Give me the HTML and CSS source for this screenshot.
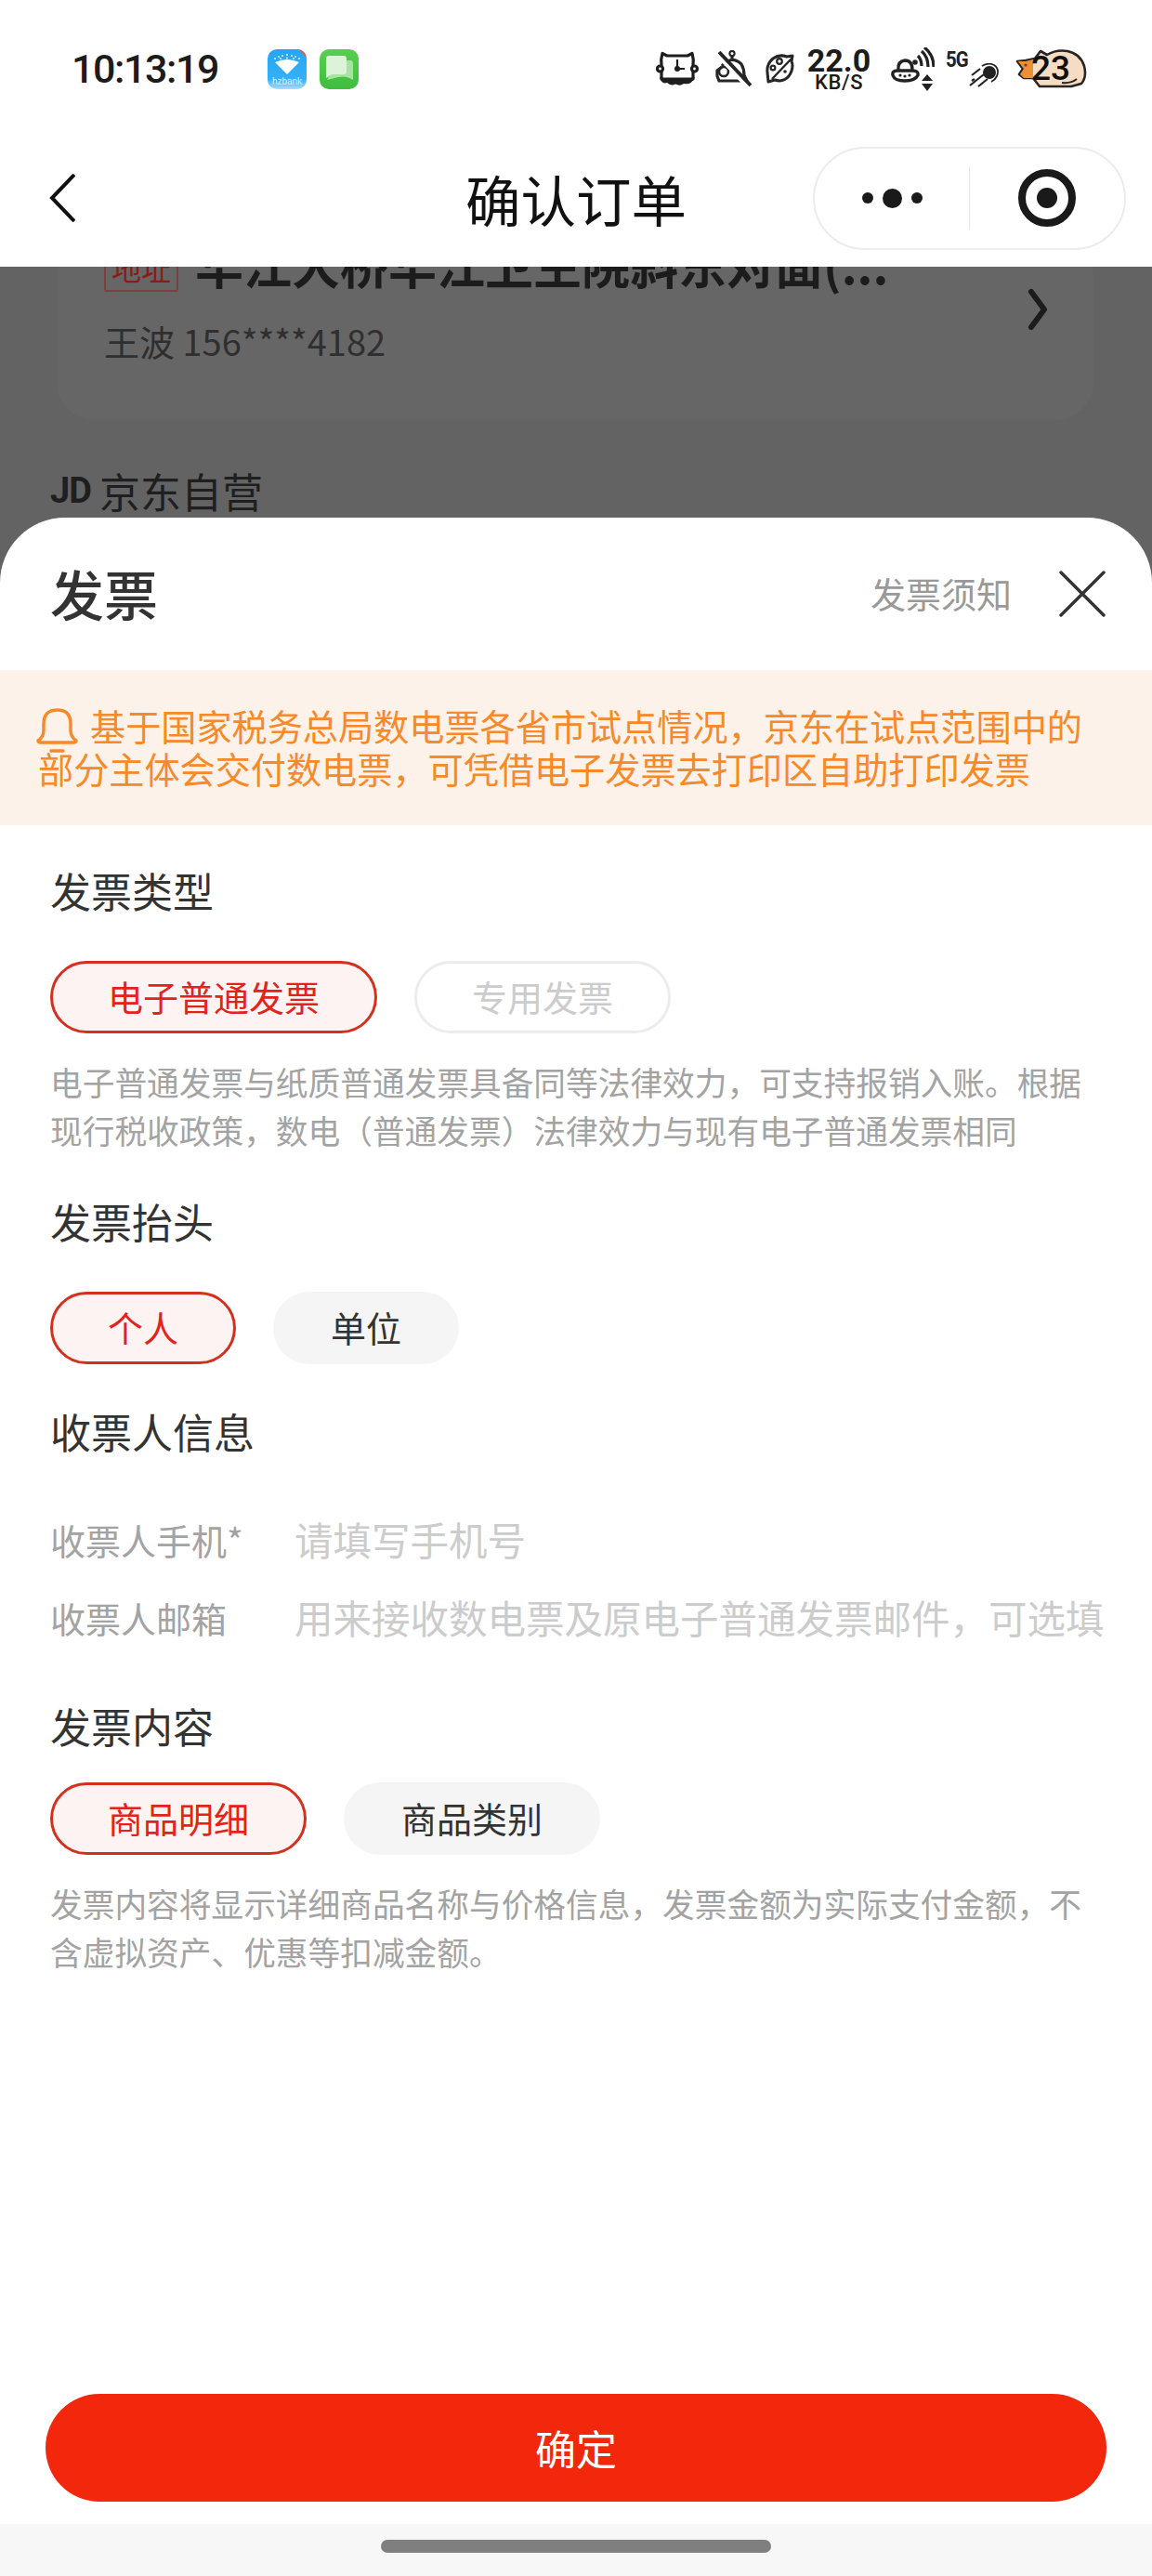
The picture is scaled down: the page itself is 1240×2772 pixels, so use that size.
FILE: index.html
```html
<!DOCTYPE html>
<html lang="zh-CN">
<head>
  <meta charset="UTF-8">
  <meta name="viewport" content="width=device-width, initial-scale=1.0">
  <title>确认订单</title>
  <link rel="stylesheet" href="styles.css">
</head>
<body>
<div class="screen">

  <div class="status-bar">
    <div class="status-left">
      <span class="time">10:13:19</span>
      <div class="app-icons">
        <div class="app-icon app-bank">
          <svg width="42" height="30" viewBox="0 0 42 30">
            <path d="M8 14 Q21 8 34 14 L21 27 Z" fill="#fff"/>
            <g fill="#fff" opacity="0.85">
              <circle cx="8" cy="10" r="1"/><circle cx="12" cy="8" r="1"/><circle cx="16" cy="7" r="1"/>
              <circle cx="21" cy="6" r="1"/><circle cx="26" cy="7" r="1"/><circle cx="30" cy="8" r="1"/><circle cx="34" cy="10" r="1"/>
              <circle cx="14" cy="10" r="1"/><circle cx="21" cy="9.5" r="1"/><circle cx="28" cy="10" r="1"/>
            </g>
            <path d="M33 0 H37 Q42 0 42 5 V9 Z" fill="#e8584f"/>
          </svg>
          <span class="bank-name">hzbank</span>
        </div>
        <div class="app-icon app-msg">
          <svg width="42" height="42" viewBox="0 0 42 42">
            <path d="M17 12 H33 Q36 12 36 15 V33 Q29 28 20 30 L8 33 L12 26 H17 Z" fill="#a9e3a3"/>
            <path d="M10 7 H26 Q29 7 29 10 V24 Q29 27 26 27 H13 L7 31 V10 Q7 7 10 7 Z" fill="#dcf3da"/>
          </svg>
        </div>
      </div>
    </div>

    <div class="status-right">
      <svg class="st-icon" width="46" height="38" viewBox="0 0 46 38" fill="none" stroke="#1e1e1e" stroke-width="3.2">
        <path d="M7 2.5 L12 5 H34 L39 2.5 Q41 9 40 15 V30 H6 V15 Q5 9 7 2.5 Z" stroke-linejoin="round"/>
        <circle cx="4.5" cy="19" r="3" fill="#fff"/><circle cx="41.5" cy="19" r="3" fill="#fff"/>
        <path d="M4 28 Q6 36 12 34 Q16 38 21 35.5 Q26 38 30 35 Q38 37 42 28 Q23 33 4 28 Z" fill="#1e1e1e" stroke="none"/>
        <path d="M23 9 V19 H31" stroke-width="2.2"/>
        <circle cx="23" cy="19" r="3" fill="#1e1e1e" stroke="none"/>
      </svg>
      <svg class="st-icon st-bell" width="39" height="40" viewBox="0 0 39 40" fill="none" stroke="#262626" stroke-width="3.2">
        <circle cx="18" cy="3.5" r="2.6" stroke-width="2.2"/>
        <path d="M18 6 V10 M7 17 Q17 5 28 15 Q31 20 31 27 L34 33 H4 L2 28 V22 L7 18"/>
        <circle cx="9" cy="23" r="5" stroke-width="2.6"/>
        <path d="M1 4 L35 40" stroke-width="4" stroke="#fff"/>
        <path d="M4 2 L38 38" stroke-width="4"/>
      </svg>
      <svg class="st-icon st-planet" width="31" height="32" viewBox="0 0 31 32" fill="none" stroke="#262626" stroke-width="3">
        <path d="M29 2 L23 3 Q15 0 8 5 Q1 11 2 20 L3 30 L10 28 Q19 31 25 24 Q31 15 28 8 Z" stroke-linejoin="round"/>
        <path d="M28 5 L7 27" stroke-width="2.4"/>
        <circle cx="15" cy="8" r="2.8" stroke-width="2.2"/><circle cx="8" cy="15" r="2.4" stroke-width="2.2"/>
        <circle cx="21" cy="19" r="1.8" fill="#262626" stroke="none"/>
      </svg>
      <div class="net-speed">
        <span class="speed-num">22.0</span>
        <span class="speed-unit">KB/S</span>
      </div>
      <svg class="st-icon st-signal" width="47" height="47" viewBox="0 0 47 47" fill="none" stroke="#222">
        <path d="M8 24 Q7 15 15 14 Q23 14 23 24" stroke-width="3.4"/>
        <path d="M2 30 Q1 25 7 25 H23 Q30 25 29 30 Q26 36 15 36 Q4 36 2 30 Z" stroke-width="3.4"/>
        <g fill="#222" stroke="none"><circle cx="10" cy="30" r="1.6"/><circle cx="15" cy="31" r="1.6"/><circle cx="20" cy="30" r="1.6"/></g>
        <circle cx="26" cy="16" r="2.8" fill="#222" stroke="none"/>
        <path d="M29 9 Q33 13 33 20" stroke-width="3.2"/>
        <path d="M33 4 Q40 10 40 21" stroke-width="3.2"/>
        <path d="M36 0 Q46 8 46 21" stroke-width="3.2"/>
        <path d="M39 29 L45 36 H33 Z M33 39 H45 L39 47 Z" fill="#222" stroke="none"/>
      </svg>
      <div class="st-5g">
        <span class="label-5g">5G</span>
        <svg class="comet" width="32" height="26" viewBox="0 0 32 26" fill="none" stroke="#222">
          <circle cx="22" cy="10" r="7" fill="#222" stroke="none"/>
          <path d="M14 3 Q21 -1 27 2 Q33 6 30 14 Q28 18 24 20" stroke-width="1.8"/>
          <path d="M12 6 L3 13 M16 12 L1 24 M20 17 L10 25 M6 17 L3 19" stroke-width="2.2"/>
        </svg>
      </div>
      <div class="battery">
        <svg width="77" height="42" viewBox="0 0 77 42">
          <path d="M2 13 L11 12 L21 10 L27 2 L34 6 Q44 0 56 2 Q70 5 74 18 Q77 30 71 37 L60 40 H26 L19 31 L9 31 L4 27 L8 21 Z" fill="#f6dcc3" stroke="#2a2522" stroke-width="2.6" stroke-linejoin="round"/>
          <path d="M3 13 L11 13 L19 11 V31 H9 L5 27 L9 21 Z" fill="#ef8f35"/>
          <circle cx="11" cy="17" r="1.6" fill="#7a3a12"/>
          <path d="M50 36 Q60 37 66 32" fill="none" stroke="#2a2522" stroke-width="2"/>
        </svg>
        <span class="battery-num">23</span>
      </div>
    </div>
  </div>

  <div class="nav-bar">
    <svg class="nav-back" width="28" height="52" viewBox="0 0 28 52" fill="none" stroke="#111" stroke-width="4">
      <path d="M27 1 L3 26 L27 51"/>
    </svg>
    <h1 class="nav-title">确认订单</h1>
    <div class="capsule">
      <div class="capsule-side">
        <span class="dot"></span><span class="dot dot-big"></span><span class="dot"></span>
      </div>
      <div class="capsule-line"></div>
      <div class="capsule-side">
        <span class="target"></span>
      </div>
    </div>
  </div>

  <!-- page behind the sheet, dimmed -->
  <div class="behind">
    <div class="addr-card">
      <div class="addr-main">
        <div class="addr-top">
          <span class="addr-tag">地址</span>
          <span class="addr-title">华江大桥华江卫生院斜东对面(...</span>
        </div>
        <div class="addr-person">王波 156****4182</div>
      </div>
      <svg class="addr-arrow" width="22" height="46" viewBox="0 0 22 46" fill="none" stroke="#1c1c1c" stroke-width="6" stroke-linecap="round" stroke-linejoin="round">
        <path d="M4 4 L18 23 L4 42"/>
      </svg>
    </div>
    <div class="shop-row"><span class="shop-logo">JD</span><span>京东自营</span></div>
  </div>

  <div class="sheet">
    <div class="sheet-head">
      <h2 class="sheet-title">发票</h2>
      <span class="sheet-notice-link">发票须知</span>
      <svg class="sheet-close" width="50" height="50" viewBox="0 0 50 50" fill="none" stroke="#333" stroke-width="3.4" stroke-linecap="round">
        <path d="M2 2 L48 48 M48 2 L2 48"/>
      </svg>
    </div>

    <div class="notice">
      <svg class="notice-bell" width="45" height="50" viewBox="0 0 45 50" fill="none" stroke="#f6892a" stroke-width="3.4" stroke-linecap="round" stroke-linejoin="round">
        <path d="M2 36 Q8 32 8 25 V18 Q8 3 22.5 3 Q37 3 37 18 V25 Q37 32 43 36 Q43 38 40 38 H5 Q2 38 2 36 Z"/>
        <path d="M16 47 H29"/>
      </svg>基于国家税务总局数电票各省市试点情况，京东在试点范围中的<br>部分主体会交付数电票，可凭借电子发票去打印区自助打印发票
    </div>

    <div class="section section-first">
      <h3 class="section-title">发票类型</h3>
      <div class="pills">
        <span class="pill active">电子普通发票</span>
        <span class="pill disabled">专用发票</span>
      </div>
      <p class="desc">电子普通发票与纸质普通发票具备同等法律效力，可支持报销入账。根据现行税收政策，数电（普通发票）法律效力与现有电子普通发票相同</p>
    </div>

    <div class="section">
      <h3 class="section-title">发票抬头</h3>
      <div class="pills">
        <span class="pill active">个人</span>
        <span class="pill">单位</span>
      </div>
    </div>

    <div class="section">
      <h3 class="section-title">收票人信息</h3>
      <div class="form-rows">
        <label class="form-row"><span class="form-label">收票人手机*</span><input type="text" placeholder="请填写手机号"></label>
        <label class="form-row"><span class="form-label">收票人邮箱</span><input type="text" placeholder="用来接收数电票及原电子普通发票邮件，可选填"></label>
      </div>
    </div>

    <div class="section section-content">
      <h3 class="section-title">发票内容</h3>
      <div class="pills pills-tight">
        <span class="pill active">商品明细</span>
        <span class="pill">商品类别</span>
      </div>
      <p class="desc">发票内容将显示详细商品名称与价格信息，发票金额为实际支付金额，不含虚拟资产、优惠等扣减金额。</p>
    </div>

    <div class="sheet-foot">
      <button type="button" class="confirm-btn">确定</button>
    </div>
    <div class="home-strip"><span class="home-bar"></span></div>
  </div>

</div>
</body>
</html>
```

FILE: styles.css
```css
:root {
  --cjk: "Noto Sans CJK SC", "Noto Sans", sans-serif;
  --text-dark: #333;
  --text-gray: #a3a3a3;
  --red: #e2231a;
  --orange: #f6892a;
}

* {
  margin: 0;
  padding: 0;
  box-sizing: border-box;
}

body {
  background: #fff;
  font-family: var(--cjk);
  color: var(--text-dark);
}

.screen {
  position: relative;
  width: 1240px;
  height: 2772px;
  overflow: hidden;
  background: #fff;
}

/* status bar */
.status-bar {
  height: 150px;
  display: flex;
  justify-content: space-between;
  align-items: center;
  padding: 0 70px 2px 77px;
}

.status-left,
.status-right {
  display: flex;
  align-items: center;
}

.time {
  font-family: Roboto, sans-serif;
  font-size: 43px;
  font-weight: 500;
  color: #1c1c1c;
  width: 211px;
  letter-spacing: -1.4px;
}

.app-icons {
  display: flex;
  gap: 14px;
}

.app-icon {
  width: 42px;
  height: 43px;
  border-radius: 10px;
  overflow: hidden;
}

.app-bank {
  background: linear-gradient(#25a5f5, #36b0f6 75%, #a9dcfa);
  display: flex;
  flex-direction: column;
  align-items: center;
}

.bank-name {
  font-family: "Liberation Sans", sans-serif;
  font-size: 10px;
  line-height: 10px;
  color: #d8f0ff;
}

.app-msg {
  background: linear-gradient(#58cf4e, #3fbd3e);
}

.st-bell { margin-left: 18px; }
.st-planet { margin-left: 15px; }

.net-speed {
  margin-left: 15px;
  width: 66px;
  display: flex;
  flex-direction: column;
  align-items: center;
  font-family: Roboto, sans-serif;
  color: #1c1c1c;
}

.speed-num {
  font-size: 34px;
  font-weight: 700;
  line-height: 30px;
}

.speed-unit {
  font-size: 22px;
  font-weight: 500;
  line-height: 18px;
  letter-spacing: 0.6px;
}

.st-signal { margin-left: 23px; }

.st-5g {
  margin-left: 12px;
  width: 54px;
  height: 40px;
  display: flex;
  align-items: flex-start;
}

.label-5g {
  font-family: Roboto, sans-serif;
  font-size: 24px;
  font-weight: 700;
  line-height: 20px;
  letter-spacing: -1px;
  color: #222;
  transform: scaleX(0.85);
  transform-origin: left;
}

.comet {
  margin: 14px 0 0 -3px;
  flex-shrink: 0;
}

.battery {
  position: relative;
  margin-left: 21px;
  width: 77px;
  height: 42px;
}

.battery-num {
  position: absolute;
  left: 17px;
  top: 0;
  font-family: Roboto, sans-serif;
  font-size: 37px;
  font-weight: 500;
  line-height: 42px;
  color: #111;
}

/* nav */
.nav-bar {
  height: 137px;
  padding-bottom: 11px;
  display: grid;
  grid-template-columns: 1fr auto 1fr;
  align-items: center;
}

.nav-back {
  margin-left: 53px;
}

.nav-title {
  font-size: 59.5px;
  font-weight: 400;
  line-height: 70px;
  color: #111;
}

.capsule {
  justify-self: end;
  margin-right: 28px;
  width: 337px;
  height: 111px;
  border: 2px solid #ececec;
  border-radius: 56px;
  display: flex;
  align-items: center;
}

.capsule-side {
  flex: 1;
  display: flex;
  justify-content: center;
  align-items: center;
  gap: 10px;
}

.capsule-line {
  width: 1px;
  height: 68px;
  background: #e6e6e6;
}

.dot {
  width: 12px;
  height: 12px;
  border-radius: 50%;
  background: #1a1a1a;
}

.dot-big {
  width: 21px;
  height: 21px;
}

.target {
  width: 62px;
  height: 62px;
  border: 8px solid #1a1a1a;
  border-radius: 50%;
  display: flex;
  justify-content: center;
  align-items: center;
}

.target::after {
  content: "";
  width: 22px;
  height: 22px;
  border-radius: 50%;
  background: #1a1a1a;
}

/* dimmed page */
.behind {
  height: 350px;
  overflow: hidden;
  background: #636363;
}

.addr-card {
  margin: -30px 63px 0 61px;
  height: 195px;
  padding: 7px 49px 0 51px;
  background: #666;
  border-radius: 40px;
  display: flex;
}

.addr-main {
  flex: 1;
}

.addr-top {
  display: flex;
  align-items: center;
}

.addr-tag {
  width: 80px;
  height: 50px;
  border: 2px solid #7d4040;
  border-radius: 3px;
  font-size: 32px;
  line-height: 44px;
  text-align: center;
  color: #8a1c14;
}

.addr-title {
  margin-left: 18px;
  font-size: 52px;
  font-weight: 700;
  line-height: 50px;
  color: #1c1c1c;
  position: relative;
  top: -5px;
}

.addr-person {
  margin-top: 28px;
  font-size: 38px;
  line-height: 50px;
  color: #2f2f2f;
}

.addr-arrow {
  margin-top: 46px;
}

.shop-row {
  margin-top: 46px;
  padding-left: 54px;
  display: flex;
  align-items: center;
  font-size: 44px;
  line-height: 60px;
  color: #1f1f1f;
}

.shop-logo {
  width: 53px;
  font-family: Roboto, sans-serif;
  font-size: 38px;
  font-weight: 700;
  letter-spacing: -1px;
}

/* invoice sheet */
.sheet {
  position: absolute;
  top: 557px;
  left: 0;
  right: 0;
  bottom: 0;
  background: #fff;
  border-radius: 70px 70px 0 0;
  display: flex;
  flex-direction: column;
}

.sheet-head {
  height: 164px;
  padding: 0 50px 0 54px;
  display: flex;
  align-items: center;
}

.sheet-title {
  flex: 1;
  margin-bottom: 2px;
  font-size: 58px;
  font-weight: 500;
  line-height: 70px;
  color: var(--text-dark);
}

.sheet-notice-link {
  margin-bottom: 4px;
  font-size: 38px;
  color: #999;
}

.sheet-close {
  margin-left: 51px;
}

.notice {
  height: 167px;
  padding: 37px 0 0 41px;
  background: #fdf2e9;
  color: var(--orange);
  font-size: 38.15px;
  line-height: 46px;
}

.notice-bell {
  margin: 0 13px -14px -2px;
}

.section {
  padding: 0 40px 0 54px;
  margin-top: 44px;
}

.section-first {
  margin-top: 42px;
}

.section-content {
  margin-top: 47px;
}

.section-title {
  margin-top: -2px;
  font-size: 44px;
  font-weight: 400;
  line-height: 60px;
  color: var(--text-dark);
}

.pills {
  margin-top: 46px;
  display: flex;
  gap: 40px;
}

.pills-tight {
  margin-top: 31px;
}

.pill {
  height: 78px;
  padding: 0 59px;
  border: 3px solid transparent;
  border-radius: 39px;
  background: #f5f5f5;
  font-size: 38px;
  line-height: 70px;
  color: var(--text-dark);
}

.pill.active {
  border-color: #d4301f;
  background: #fdf3f2;
  color: var(--red);
}

.pill.disabled {
  border-color: #ececec;
  background: #fff;
  color: #ccc;
}

.desc {
  margin-top: 26px;
  max-width: 1130px;
  font-size: 34.7px;
  line-height: 52px;
  color: var(--text-gray);
}

.form-rows {
  margin-top: 44px;
}

.form-row {
  height: 84px;
  display: flex;
  align-items: center;
}

.form-label {
  width: 263px;
  flex-shrink: 0;
  font-size: 38px;
  color: var(--text-gray);
}

.form-row input {
  flex: 1;
  min-width: 0;
  border: none;
  outline: none;
  background: none;
  font-family: var(--cjk);
  font-size: 41.5px;
}

.form-row input::placeholder {
  color: #ccc;
  opacity: 1;
}

.sheet-foot {
  margin-top: auto;
  padding: 0 49px;
}

.confirm-btn {
  width: 100%;
  height: 116px;
  border: none;
  border-radius: 58px;
  background: #f2270c;
  color: #fff;
  font-family: var(--cjk);
  font-size: 44px;
}

.home-strip {
  margin-top: 24px;
  height: 56px;
  padding-top: 17px;
  background: #f7f7f7;
  display: flex;
  justify-content: center;
  align-items: flex-start;
}

.home-bar {
  width: 420px;
  height: 14px;
  border-radius: 7px;
  background: #7f7f7f;
}
```
